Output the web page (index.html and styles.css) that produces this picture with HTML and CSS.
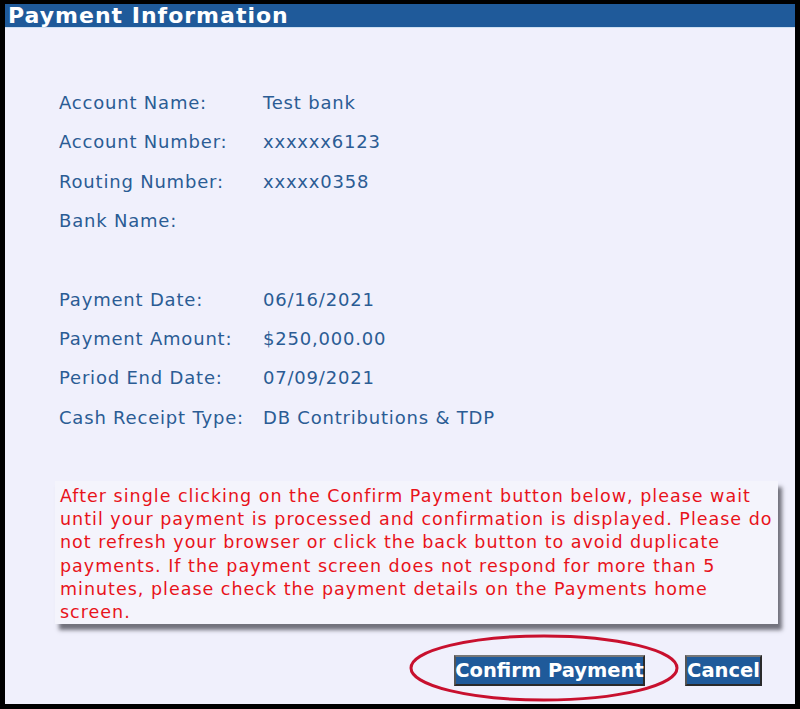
FILE: index.html
```html
<!DOCTYPE html>
<html>
<head>
<title>Payment Information</title>
<link rel="stylesheet" href="styles.css">
</head>
<body>

<div class="frame">
    <div class="header">Payment Information</div>

    <div class="content">
        <div class="details">
            <div class="label">Account Name:</div><div class="value">Test bank</div>
            <div class="label">Account Number:</div><div class="value">xxxxxx6123</div>
            <div class="label">Routing Number:</div><div class="value">xxxxx0358</div>
            <div class="label">Bank Name:</div><div class="value"></div>
            <div class="spacer"></div>
            <div class="label">Payment Date:</div><div class="value">06/16/2021</div>
            <div class="label">Payment Amount:</div><div class="value">$250,000.00</div>
            <div class="label">Period End Date:</div><div class="value">07/09/2021</div>
            <div class="label">Cash Receipt Type:</div><div class="value">DB Contributions &amp; TDP</div>
        </div>

        <div class="notice">
            After single clicking on the Confirm Payment button below, please wait<br>
            until your payment is processed and confirmation is displayed. Please do<br>
            not refresh your browser or click the back button to avoid duplicate<br>
            payments. If the payment screen does not respond for more than 5<br>
            minutes, please check the payment details on the Payments home<br>
            screen.
        </div>

        <div class="actions">
            <button class="btn confirm-btn">Confirm Payment</button>
            <button class="btn cancel-btn">Cancel</button>
        </div>
    </div>

    <svg class="highlight" width="274" height="70" viewBox="0 0 274 70">
        <ellipse cx="137" cy="35" rx="133" ry="32" fill="none" stroke="#c8102e" stroke-width="3"/>
    </svg>
</div>

</body>
</html>
```

FILE: styles.css
```css
body {
    margin: 0;
    padding: 0;
    background-color: #000;
    font-family: "DejaVu Sans", Verdana, sans-serif;
}
.frame {
    position: relative;
    box-sizing: border-box;
    width: 800px;
    height: 709px;
    border: 5px solid #000;
    border-top-width: 4px;
    background-color: #f0f0fc;
}
.header {
    background-color: #1f5a9a;
    color: #fff;
    font-weight: bold;
    font-size: 22px;
    letter-spacing: 1px;
    line-height: 23px;
    padding-left: 3px;
    border-bottom: 1px solid #cfe0f2;
}
.content {
    padding: 55px 0 0 54px;
}
.details {
    display: grid;
    grid-template-columns: 204px auto;
    grid-auto-rows: 39.3px;
    align-items: center;
    font-size: 18px;
    letter-spacing: 0.8px;
    color: #2b5c94;
}
.spacer {
    grid-column: 1 / 3;
}
.notice {
    box-sizing: border-box;
    width: 723px;
    margin: 44px 0 0 -4px;
    padding: 4px 0 0 5px;
    background-color: #f4f4fc;
    color: #e8121a;
    font-size: 17.5px;
    letter-spacing: 1px;
    line-height: 23.3px;
    white-space: nowrap;
    box-shadow: 4px 6px 4px rgba(60, 60, 70, 0.7);
}
.actions {
    display: flex;
    justify-content: flex-end;
    gap: 40px;
    margin: 31px 33px 0 0;
}
.btn {
    box-sizing: border-box;
    display: flex;
    align-items: center;
    justify-content: center;
    height: 31px;
    padding: 0;
    background-color: #1f5a9a;
    color: #fff;
    font-family: "DejaVu Sans", Verdana, sans-serif;
    font-weight: bold;
    font-size: 19.5px;
    white-space: nowrap;
    border: 2px solid #2a2a2a;
    border-top-color: #777;
    border-left-color: #555;
    cursor: pointer;
}
.confirm-btn {
    width: 191px;
}
.cancel-btn {
    width: 77px;
}
.highlight {
    position: absolute;
    left: 402px;
    top: 629px;
}
```
